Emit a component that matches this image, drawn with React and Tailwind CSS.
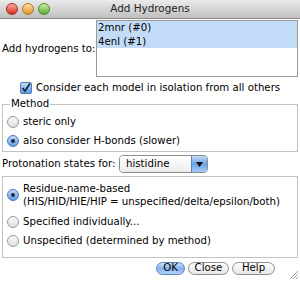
import React from 'react';

const Radio = ({ on }) => (
  <span
    className={
      'inline-flex items-center justify-center w-[12px] h-[12px] rounded-full border shrink-0 ' +
      (on
        ? 'border-[#4a78b8] bg-gradient-to-b from-[#c3dbf6] to-[#5b9be3]'
        : 'border-[#9a9a9a] bg-gradient-to-b from-[#fafafa] to-[#dedede]')
    }
  >
    {on && <span className="w-[4px] h-[4px] rounded-full bg-[#1b2a44]" />}
  </span>
);

const Light = ({ from, to, border }) => (
  <span className={'w-[12px] h-[12px] rounded-full border bg-gradient-to-b ' + from + ' ' + to + ' ' + border} />
);

const Button = ({ children, primary, w }) => (
  <button
    className={
      'h-[13px] rounded-full border leading-none flex items-center justify-center ' +
      w +
      (primary
        ? ' border-[#5a82bd] bg-gradient-to-b from-[#cfe2f8] via-[#82b3ee] to-[#b3d3f7] text-black'
        : ' border-[#8d8d8d] bg-gradient-to-b from-white to-[#e6e6e6] text-black')
    }
  >
    {children}
  </button>
);

export default function App() {
  return (
    <div
      className="relative w-[300px] h-[281px] bg-white flex flex-col text-[10.2px] text-black overflow-hidden"
      style={{ fontFamily: '"DejaVu Sans", sans-serif' }}
    >
      {/* title bar */}
      <div className="h-[19px] shrink-0 flex items-center bg-gradient-to-b from-[#ebebeb] to-[#bfbfbf] border-b border-[#8a8a8a]">
        <div className="flex gap-[4px] pl-[6px]">
          <Light from="from-[#ffa59b]" to="to-[#d2241c]" border="border-[#a32d25]" />
          <Light from="from-[#ffe3a0]" to="to-[#e0931e]" border="border-[#b0762a]" />
          <Light from="from-[#caf2a6]" to="to-[#5aa92c]" border="border-[#4b8a2a]" />
        </div>
        <div className="flex-1 text-center text-[10.4px] text-[#222] pr-[50px]">Add Hydrogens</div>
      </div>

      {/* add hydrogens to */}
      <div className="flex items-center mt-[1px] pr-[2px]">
        <span className="pl-[2px] flex-1 whitespace-nowrap">Add hydrogens to:</span>
        <div className="w-[202px] h-[57px] border border-[#9a9a9a] bg-white leading-[14px]">
          <div className="bg-[#c2dcf7] pl-[1px] h-[27px]">
            <div>2mnr (#0)</div>
            <div>4enl (#1)</div>
          </div>
        </div>
      </div>

      {/* checkbox */}
      <div className="flex items-center gap-[4px] pl-[20px] mt-[5px] h-[12px] whitespace-nowrap">
        <span className="w-[12px] h-[12px] rounded-[2px] border border-[#4a78b8] bg-gradient-to-b from-[#c3dbf6] to-[#5b9be3] flex items-center justify-center">
          <svg width="10" height="10" viewBox="0 0 10 10">
            <path d="M1.5 5 L4 8 L9 0.5" fill="none" stroke="#1b2a44" strokeWidth="1.8" />
          </svg>
        </span>
        <span>Consider each model in isolation from all others</span>
      </div>

      {/* method */}
      <fieldset className="mx-[2px] mt-[4px] border border-[#c2c2c2] h-[54px] pl-[4px]">
        <legend className="ml-[3px] px-[1px] leading-[12px]">Method</legend>
        <div className="flex items-center gap-[4px] h-[19px] mt-[2px]">
          <Radio />
          <span>steric only</span>
        </div>
        <div className="flex items-center gap-[4px] h-[19px]">
          <Radio on />
          <span>also consider H-bonds (slower)</span>
        </div>
      </fieldset>

      {/* protonation */}
      <div className="flex items-center mt-[3px] pl-[2px] h-[18px]">
        <span className="w-[117px] whitespace-nowrap">Protonation states for:</span>
        <div className="w-[89px] h-[18px] rounded-[4px] border border-[#8d8d8d] flex overflow-hidden">
          <div className="flex-1 pl-[6px] flex items-center bg-gradient-to-b from-white to-[#ececec]">histidine</div>
          <div className="w-[16px] bg-gradient-to-b from-[#c3dbf6] via-[#6aa2e8] to-[#a6cbf5] border-l border-[#5a82bd] flex items-center justify-center">
            <svg width="7" height="5" viewBox="0 0 7 5">
              <path d="M0 0 L7 0 L3.5 5 Z" fill="#111" />
            </svg>
          </div>
        </div>
      </div>

      {/* protonation options */}
      <div className="mx-[2px] mt-[3px] border border-[#c2c2c2] h-[82px] pl-[4px] pt-[5px]">
        <div className="flex items-center gap-[4px]">
          <Radio on />
          <div className="leading-[13px] whitespace-nowrap">
            <div>Residue-name-based</div>
            <div>(HIS/HID/HIE/HIP = unspecified/delta/epsilon/both)</div>
          </div>
        </div>
        <div className="flex items-center gap-[4px] h-[19px] mt-[4px]">
          <Radio />
          <span>Specified individually...</span>
        </div>
        <div className="flex items-center gap-[4px] h-[19px]">
          <Radio />
          <span>Unspecified (determined by method)</span>
        </div>
      </div>

      {/* buttons */}
      <div className="flex items-center justify-end gap-[3px] pr-[25px] mt-[4px]">
        <Button primary w="w-[29px]">OK</Button>
        <Button w="w-[41px]">Close</Button>
        <Button w="w-[43px]">Help</Button>
      </div>

      {/* resize grip */}
      <svg className="absolute right-[1px] bottom-[1px]" width="12" height="12" viewBox="0 0 12 12">
        <path d="M11 3 L3 11 M11 6 L6 11 M11 9 L9 11" stroke="#a0a0a0" strokeWidth="1" />
      </svg>
    </div>
  );
}
